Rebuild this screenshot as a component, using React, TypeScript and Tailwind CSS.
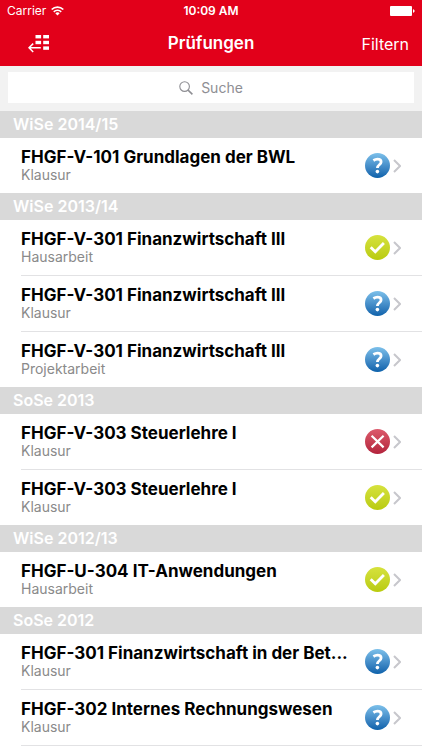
import React from "react";

type Status = "open" | "passed" | "failed";

interface Exam {
  title: string;
  kind: string;
  status: Status;
}

interface Semester {
  name: string;
  exams: Exam[];
}

const semesters: Semester[] = [
  {
    name: "WiSe 2014/15",
    exams: [
      { title: "FHGF-V-101 Grundlagen der BWL", kind: "Klausur", status: "open" },
    ],
  },
  {
    name: "WiSe 2013/14",
    exams: [
      { title: "FHGF-V-301 Finanzwirtschaft III", kind: "Hausarbeit", status: "passed" },
      { title: "FHGF-V-301 Finanzwirtschaft III", kind: "Klausur", status: "open" },
      { title: "FHGF-V-301 Finanzwirtschaft III", kind: "Projektarbeit", status: "open" },
    ],
  },
  {
    name: "SoSe 2013",
    exams: [
      { title: "FHGF-V-303 Steuerlehre I", kind: "Klausur", status: "failed" },
      { title: "FHGF-V-303 Steuerlehre I", kind: "Klausur", status: "passed" },
    ],
  },
  {
    name: "WiSe 2012/13",
    exams: [
      { title: "FHGF-U-304 IT-Anwendungen", kind: "Hausarbeit", status: "passed" },
    ],
  },
  {
    name: "SoSe 2012",
    exams: [
      { title: "FHGF-301 Finanzwirtschaft in der Bet...", kind: "Klausur", status: "open" },
      { title: "FHGF-302 Internes Rechnungswesen", kind: "Klausur", status: "open" },
    ],
  },
];

const badgeColors: Record<Status, string> = {
  open: "bg-linear-to-b from-[#7cc0ea] to-[#0a62ab]",
  passed: "bg-linear-to-b from-[#d6e23c] to-[#b9cb0c]",
  failed: "bg-linear-to-b from-[#dc5a6c] to-[#b3223c]",
};

const StatusBadge: React.FC<{ status: Status }> = ({ status }) => (
  <span
    className={`flex size-[25px] shrink-0 items-center justify-center rounded-full ${badgeColors[status]}`}
  >
    <svg
      viewBox="0 0 25 25"
      className="size-[25px]"
      fill="none"
      stroke="white"
      strokeWidth="2.8"
    >
      {status === "open" && (
        <>
          <path d="M8.4 7.5C9.8 6.6 11 6.2 12.4 6.2c2.4 0 3.7 1.1 3.7 2.8 0 2.8-3.7 2.7-3.7 6" />
          <circle cx="12.4" cy="18.6" r="1.8" fill="white" stroke="none" />
        </>
      )}
      {status === "passed" && <path d="M5.7 12.2l4.6 4.6 8.6-8.7" />}
      {status === "failed" && (
        <path d="M6.6 6.8l12 11.6M18.6 6.8l-12 11.6" strokeWidth="2.2" />
      )}
    </svg>
  </span>
);

const Chevron = () => (
  <svg
    viewBox="0 0 8 14"
    className="h-[14px] w-2 shrink-0"
    fill="none"
    stroke="#c7c7cc"
    strokeWidth="2"
  >
    <path d="M1 1l6 6-6 6" />
  </svg>
);

const StatusBar = () => (
  <div className="flex h-[22px] items-center px-[7px] text-xs">
    <div className="flex flex-1 items-center gap-[5px]">
      <span>Carrier</span>
      <svg viewBox="0 0 13 10" className="h-[10px] w-[13px]" fill="none" stroke="white">
        <path d="M.7 3.5a8.2 8.2 0 0 1 11.6 0" strokeWidth="1.7" />
        <path d="M2.8 5.8a5.2 5.2 0 0 1 7.4 0" strokeWidth="1.7" />
        <path d="M6.5 9.6L4.3 7.3a3.1 3.1 0 0 1 4.4 0z" fill="white" stroke="none" />
      </svg>
    </div>
    <span className="font-semibold">10:09 AM</span>
    <div className="flex flex-1 justify-end">
      <svg viewBox="0 0 25 10" className="h-[10px] w-[25px]" fill="white">
        <rect width="22" height="10" rx="1" />
        <path d="M23 3.2c1.2.2 1.6 1 1.6 1.8s-.4 1.6-1.6 1.8z" />
      </svg>
    </div>
  </div>
);

const NavBar = () => (
  <div className="flex h-[44px] items-center px-[13px]">
    <div className="flex flex-1">
      <button aria-label="Menü" className="ml-[15px]">
        <svg viewBox="0 0 22 18" className="h-[18px] w-[22px]" fill="white">
          <rect x="7.5" y="0" width="5.6" height="3.4" />
          <rect x="15.2" y="0" width="5.8" height="3.4" />
          <rect x="7.5" y="5.8" width="5.6" height="3.4" />
          <rect x="15.2" y="5.8" width="5.8" height="3.4" />
          <rect x="15.2" y="11.4" width="5.8" height="3.4" />
          <path
            d="M12.8 12.8H1.2M5.2 8.6L1 12.8l4.2 4.2"
            fill="none"
            stroke="white"
            strokeWidth="1.5"
          />
        </svg>
      </button>
    </div>
    <h1 className="text-[17px] font-semibold">Prüfungen</h1>
    <div className="flex flex-1 justify-end">
      <button className="text-base">Filtern</button>
    </div>
  </div>
);

const SearchBar = () => (
  <div className="bg-[#f2f2f2] px-2 pt-[6px] pb-2">
    <label className="flex h-[31px] items-center justify-center gap-2 bg-white">
      <svg
        viewBox="0 0 14 14"
        className="size-[14px]"
        fill="none"
        stroke="#8e8e93"
        strokeWidth="1.1"
      >
        <circle cx="5.6" cy="5.6" r="4.8" />
        <path d="M9.1 9.1l4.3 4.3" strokeWidth="1.5" />
      </svg>
      <input
        type="search"
        aria-label="Suche"
        placeholder="Suche"
        className="field-sizing-content text-sm outline-none placeholder:text-[#8e8e93]"
      />
    </label>
  </div>
);

const ExamRow: React.FC<{ exam: Exam }> = ({ exam }) => (
  <li>
    <a href="#" className="flex h-[55px] items-center pr-[21px]">
      <div className="min-w-0 flex-1 pb-[2px]">
        <p className="truncate text-[17px] leading-[19px] font-bold text-black">
          {exam.title}
        </p>
        <p className="text-sm leading-[15px] text-[#8a8a8a]">{exam.kind}</p>
      </div>
      <div className="flex items-center gap-[3px]">
        <StatusBadge status={exam.status} />
        <Chevron />
      </div>
    </a>
  </li>
);

const App = () => (
  <div className="min-h-screen bg-white font-['Inter',sans-serif]">
    <header className="bg-[#e2001a] text-white">
      <StatusBar />
      <NavBar />
    </header>
    <SearchBar />
    <main>
      {semesters.map((semester) => (
        <section key={semester.name} className="group">
          <h2 className="h-[27px] bg-[#d9d9d9] px-[13px] text-base leading-[27px] font-semibold text-white">
            {semester.name}
          </h2>
          <ul className="ml-[21px] divide-y divide-[#e2e2e4] border-[#e2e2e4] group-last:border-b">
            {semester.exams.map((exam, index) => (
              <ExamRow key={index} exam={exam} />
            ))}
          </ul>
        </section>
      ))}
    </main>
  </div>
);

export default App;
